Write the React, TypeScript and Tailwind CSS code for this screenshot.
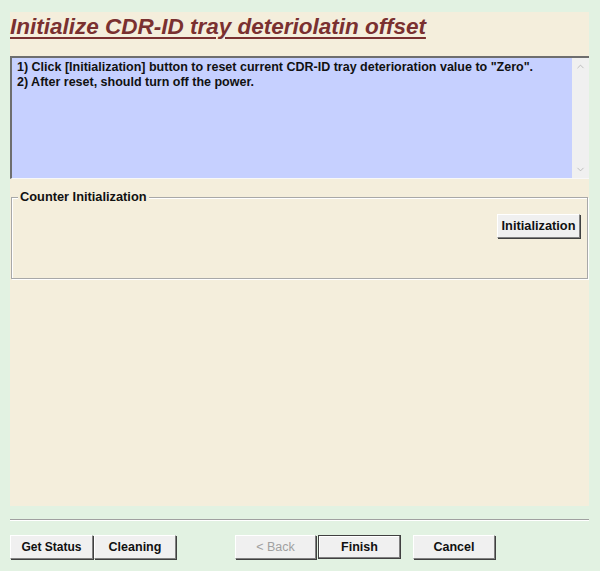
import { ChevronUp, ChevronDown } from 'lucide-react'

const font = { fontFamily: '"Liberation Sans", Arial, sans-serif' }

function WinButton({ label, disabled, primary, className }: { label: string; disabled?: boolean; primary?: boolean; className?: string }) {
    return (
        <button
            className={
                'h-[24px] font-bold bg-[#f0f0f0] border ' +
                (primary
                    ? 'border-[#404040] shadow-[inset_-1px_-1px_0_#808080,inset_1px_1px_0_#ffffff] '
                    : 'border-t-white border-l-white border-r-[#808080] border-b-[#808080] shadow-[1px_1px_0_#404040] ') +
                (disabled ? 'text-[#a0a0a0] font-normal ' : 'text-[#111] ') +
                (className ?? '')
            }
        >
            {label}
        </button>
    )
}

export default function App() {
    return (
        <div className="w-[600px] h-[571px] bg-[#e2f2e2] pt-[12px] px-[10px] flex flex-col" style={font}>
            <div className="w-[579px] h-[494px] bg-[#f4eedc] flex flex-col">
                {/* Title */}
                <div className="h-[44px] pt-[1px]">
                    <h1 className="text-[22.5px] leading-[27px] font-bold italic underline decoration-2 underline-offset-[3px] text-[#7a3030]">
                        Initialize CDR-ID tray deteriolatin offset
                    </h1>
                </div>

                {/* Message box */}
                <div className="h-[123px] flex bg-[#c6d0ff] border-t-2 border-l-2 border-t-[#6e6e6e] border-l-[#6e6e6e] border-b border-b-[#f8f8f8]">
                    <div className="flex-1 pl-[5px] pt-[2px] text-[12.5px] leading-[15px] font-bold text-[#111]">
                        <div>1) Click [Initialization] button to reset current CDR-ID tray deterioration value to "Zero".</div>
                        <div>2) After reset, should turn off the power.</div>
                    </div>
                    <div className="w-[17px] bg-[#f0f0f0] flex flex-col justify-between items-center py-[3px] text-[#a8a8a8]">
                        <ChevronUp size={11} strokeWidth={1.5} />
                        <ChevronDown size={11} strokeWidth={1.5} />
                    </div>
                </div>

                {/* Group box */}
                <div className="relative mt-[18px] mx-[1px] h-[82px] border border-[#a8a8a8] shadow-[inset_1px_1px_0_#ffffff,1px_1px_0_#ffffff]">
                    <span className="absolute left-[6px] -top-[9px] px-[2px] bg-[#f4eedc] text-[12.8px] leading-[16px] font-bold text-[#111]">
                        Counter Initialization
                    </span>
                    <div className="flex justify-end pt-[16px] pr-[7px]">
                        <WinButton label="Initialization" className="w-[83px] text-[12.8px]" />
                    </div>
                </div>
            </div>

            {/* Separator */}
            <div className="w-[579px] mt-[13px] border-t border-t-[#a0a0a0] border-b border-b-white" />

            {/* Bottom buttons */}
            <div className="flex mt-[14px] text-[12px]">
                <WinButton label="Get Status" className="w-[83px] text-[12px]" />
                <WinButton label="Cleaning" className="w-[82px] ml-[1px] text-[12.5px]" />
                <WinButton label="< Back" disabled className="w-[81px] ml-[59px] text-[12.5px]" />
                <WinButton label="Finish" primary className="w-[83px] ml-[2px] text-[12.5px]" />
                <WinButton label="Cancel" className="w-[82px] ml-[12px] text-[12.5px]" />
            </div>
        </div>
    )
}
